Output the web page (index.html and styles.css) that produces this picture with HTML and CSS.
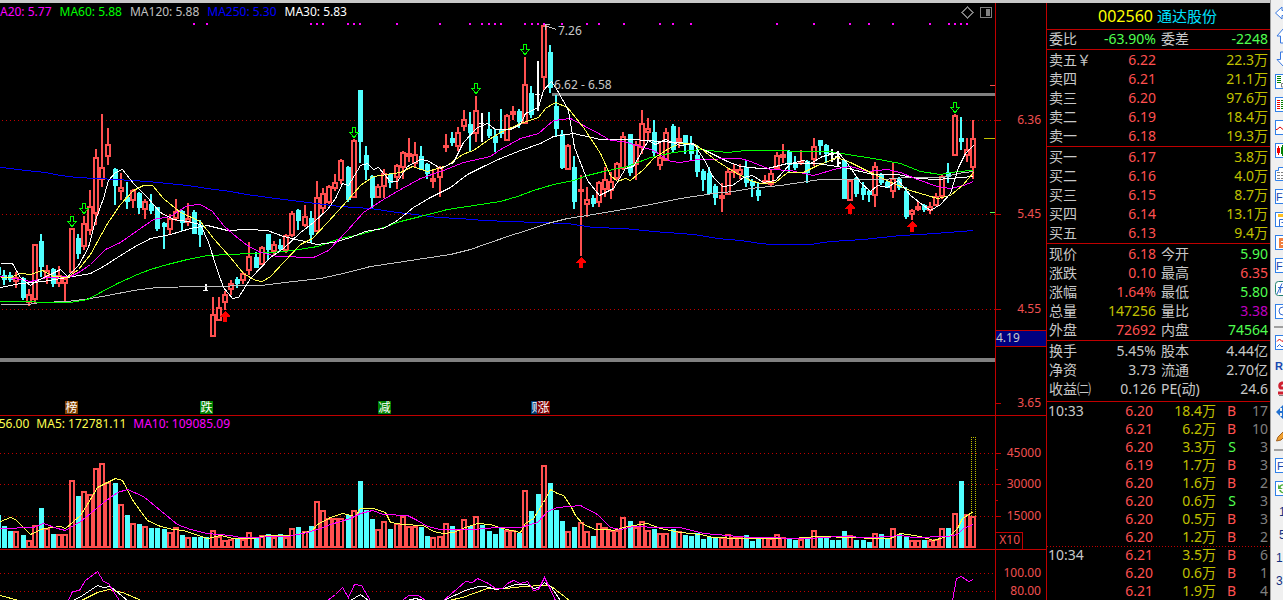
FILE: index.html
```html
<!DOCTYPE html>
<html lang="zh-CN">
<head>
<meta charset="utf-8">
<title>002560 通达股份</title>
<link rel="stylesheet" href="styles.css">
</head>
<body>
<main class="terminal">
  <section class="charts">
    <div class="pane pane-price">
      <svg class="plot" viewBox="0 3 1046 413" preserveAspectRatio="xMaxYMin slice" shape-rendering="crispEdges">
        <g class="grid"><path d="M2 120.5H995M2 214.5H995M2 309.5H995"/></g>
        <rect class="band" x="552" y="93" width="443" height="3"/>
        <rect class="band" x="0" y="358" width="995" height="4"/>
        <g id="candles"></g>
        <g id="price-lines" transform="translate(0.5 0.5)"></g>
        <g id="marks"></g>
        <path class="pointer" d="M556 29.5L545 25.5M550 24.5H545V30"/>
        <text class="note" x="558" y="35">7.26</text>
        <text class="note" x="554" y="89">6.62 - 6.58</text>
        <g class="tag">
          <rect x="65" y="401" width="13" height="13" fill="#804000"/><text x="65.5" y="412">榜</text>
          <rect x="200" y="401" width="13" height="13" fill="#008000"/><text x="200.5" y="412">跌</text>
          <rect x="378" y="401" width="13" height="13" fill="#008000"/><text x="378.5" y="412">减</text>
          <rect x="531" y="401" width="13" height="13" fill="#003870"/><text x="531.5" y="412">财</text>
          <rect x="537" y="401" width="13" height="13" fill="#800000"/><text x="537.5" y="412">涨</text>
        </g>
        <path class="frame" d="M995.5 3V416M995 120.5h6M995 214.5h6M995 309.5h6M995 403.5h6M0 415.5H1046"/>
        <path stroke="#f05050" d="M990 85.5h5"/>
        <path stroke="#c0c000" d="M984 138.5h11"/>
        <path stroke="#50ff50" d="M990 212.5h5"/>
        <rect x="996" y="330" width="50" height="17" fill="#000080"/>
        <path class="frame" d="M996 330.5H1046M996 346.5H1046"/>
        <text class="note" x="996" y="342">4.19</text>
        <g class="axis"><text x="1041" y="124">6.36</text><text x="1041" y="218">5.45</text><text x="1041" y="313">4.55</text><text x="1041" y="407">3.65</text></g>
        <g class="tool"><path d="M962 12.5L967.5 7L973 12.5L967.5 18Z"/><rect x="980.5" y="7.5" width="11" height="10" rx="1"/><path class="tool-fill" d="M986 9h4v7h-4z"/></g>
      </svg>
      <div class="legend legend-price">
        <span class="ma20">MA20: 5.77</span><span class="ma60">MA60: 5.88</span><span class="ma120">MA120: 5.88</span><span class="ma250">MA250: 5.30</span><span class="ma30">MA30: 5.83</span>
      </div>
    </div>
    <div class="pane pane-volume">
      <svg class="plot" viewBox="0 416 1046 134" preserveAspectRatio="xMaxYMin slice" shape-rendering="crispEdges">
        <g class="grid"><path d="M0 453.5H995M0 484.5H995M0 516.5H995"/></g>
        <g id="volumes"></g>
        <path class="projection" d="M971.5 437V516M975.5 437V516M971 437.5H976"/>
        <g id="volume-lines" transform="translate(0.5 0.5)"></g>
        <path class="frame" d="M995.5 416V550M995 453.5h6M995 484.5h6M995 516.5h6M995 469.5h3M995 500.5h3M0 549.5H1046M995 532.5H1022.5V549"/>
        <g class="axis"><text x="1041" y="457">45000</text><text x="1041" y="488">30000</text><text x="1041" y="520">15000</text><text x="1020" y="544">X10</text></g>
      </svg>
      <div class="legend legend-volume"><span class="yellow">147256.00</span><span class="yellow">MA5: 172781.11</span><span class="ma20">MA10: 109085.09</span></div>
    </div>
    <div class="pane pane-osc">
      <svg class="plot" viewBox="0 550 1046 50" preserveAspectRatio="xMaxYMin slice" shape-rendering="crispEdges">
        <g class="grid"><path d="M0 573.5H995M0 591.5H995"/></g>
        <g id="osc-lines" transform="translate(0.5 0.5)"></g>
        <path class="frame" d="M995.5 550V600"/>
        <g class="axis"><text x="1041" y="577">100.00</text><text x="1041" y="595">80.00</text></g>
      </svg>
    </div>
  </section>
  <aside class="quote">
    <h1 class="title"><span class="code">002560</span><span class="name">通达股份</span></h1>
    <table class="block flush">
      <tr><th>委比</th><td class="green">-63.90%</td><th>委差</th><td class="green">-2248</td></tr>
    </table>
    <table class="block book">
      <tr><th>卖五￥</th><td>6.22</td><td colspan="2">22.3万</td></tr>
      <tr><th>卖四</th><td>6.21</td><td colspan="2">21.1万</td></tr>
      <tr><th>卖三</th><td>6.20</td><td colspan="2">97.6万</td></tr>
      <tr><th>卖二</th><td>6.19</td><td colspan="2">18.4万</td></tr>
      <tr><th>卖一</th><td>6.18</td><td colspan="2">19.3万</td></tr>
    </table>
    <table class="block book">
      <tr><th>买一</th><td>6.17</td><td colspan="2">3.8万</td></tr>
      <tr><th>买二</th><td>6.16</td><td colspan="2">4.0万</td></tr>
      <tr><th>买三</th><td>6.15</td><td colspan="2">8.7万</td></tr>
      <tr><th>买四</th><td>6.14</td><td colspan="2">13.1万</td></tr>
      <tr><th>买五</th><td>6.13</td><td colspan="2">9.4万</td></tr>
    </table>
    <table class="block">
      <tr><th>现价</th><td class="red">6.18</td><th>今开</th><td class="green">5.90</td></tr>
      <tr><th>涨跌</th><td class="red">0.10</td><th>最高</th><td class="red">6.35</td></tr>
      <tr><th>涨幅</th><td class="red">1.64%</td><th>最低</th><td class="green">5.80</td></tr>
      <tr><th>总量</th><td class="olive">147256</td><th>量比</th><td class="purple">3.38</td></tr>
      <tr><th>外盘</th><td class="red">72692</td><th>内盘</th><td class="green">74564</td></tr>
    </table>
    <table class="block last">
      <tr><th>换手</th><td>5.45%</td><th>股本</th><td>4.44亿</td></tr>
      <tr><th>净资</th><td>3.73</td><th>流通</th><td>2.70亿</td></tr>
      <tr><th>收益㈡</th><td>0.126</td><th>PE(动)</th><td>24.6</td></tr>
    </table>
    <table class="ticks">
      <tr><th>10:33</th><td>6.20</td><td>18.4万</td><td class="buy">B</td><td>17</td></tr>
      <tr><th></th><td>6.21</td><td>6.2万</td><td class="buy">B</td><td>10</td></tr>
      <tr><th></th><td>6.20</td><td>3.3万</td><td class="sell">S</td><td>3</td></tr>
      <tr><th></th><td>6.19</td><td>1.7万</td><td class="buy">B</td><td>3</td></tr>
      <tr><th></th><td>6.20</td><td>1.6万</td><td class="buy">B</td><td>2</td></tr>
      <tr><th></th><td>6.20</td><td>0.6万</td><td class="sell">S</td><td>3</td></tr>
      <tr><th></th><td>6.20</td><td>0.5万</td><td class="buy">B</td><td>3</td></tr>
      <tr><th></th><td>6.20</td><td>1.2万</td><td class="buy">B</td><td>2</td></tr>
      <tr class="minute"><th>10:34</th><td>6.21</td><td>3.5万</td><td class="buy">B</td><td>6</td></tr>
      <tr><th></th><td>6.20</td><td>0.6万</td><td class="buy">B</td><td>1</td></tr>
      <tr><th></th><td>6.21</td><td>1.9万</td><td class="buy">B</td><td>4</td></tr>
    </table>
  </aside>
</main>
<nav class="toolbar" aria-label="工具栏">
  <button aria-label="后退"><svg viewBox="0 0 16 16"><path class="arrow" d="M0.5 8L7 2V5.500H15V10.500H7V14Z"/></svg></button>
  <button aria-label="向上"><svg viewBox="0 0 16 16"><path class="arrow" d="M8.500 0.500L15.500 8H11.500V15H5.500V8H2Z"/></svg></button>
  <button aria-label="向下"><svg viewBox="0 0 16 16"><path class="arrow" d="M5.500 1H11.500V8H15.500L8.500 15.500L2 8.500H5.500Z"/></svg></button>
  <button aria-label="报表"><svg viewBox="0 0 16 16"><rect class="box" x=".5" y=".5" width="15" height="14"/><path stroke="#008000" d="M2 2.500h4M2 4.500h4M2 6.500h4M2 8.500h4"/><path class="dim" d="M14 9.500H6.500V13H14"/></svg></button>
  <button aria-label="分价"><svg viewBox="0 0 16 16"><rect class="box" x=".5" y=".5" width="15" height="14"/><path stroke="#f00000" d="M2 3.500h3M2 5.500h3M2 7.500h3M2 9.500h3M2 11.500h3"/><path stroke="#008000" d="M6 3.500h3M6 5.500h3M6 7.500h3M6 9.500h3M6 11.500h3"/></svg></button>
  <button aria-label="分时"><svg viewBox="0 0 16 16"><rect class="box" x=".5" y=".5" width="15" height="14"/><path stroke="#e00000" fill="none" d="M1 9.500H2L5 7L8 9.500L12 6"/></svg></button>
  <button aria-label="K线"><svg viewBox="0 0 16 16"><rect class="box" x=".5" y=".5" width="15" height="14"/><path fill="#f00000" d="M2 5h1V3h1v2h1v5H4v2H3v-2H2z"/><path fill="#008000" d="M6 4h1V2h1v11H7v-2H6z"/></svg></button>
  <button aria-label="资料"><svg viewBox="0 0 16 16"><path class="box" d="M.5 4.500H3.500V1.500H15V14.500H.5Z"/><path class="dim" d="M2 6.500h12M2 9.500h12M2 12.500h12" stroke-dasharray="3 1"/></svg></button>
  <button aria-label="公式"><svg viewBox="0 0 16 16"><rect class="box" x=".5" y=".5" width="15" height="14"/><text x="1" y="12">Fn</text></svg></button>
  <button aria-label="画图"><svg viewBox="0 0 16 16"><rect class="box" x=".5" y=".5" width="15" height="14"/><rect x="3" y="2" width="10" height="3" fill="#ffc020"/><path class="thin" d="M4.500 14V7.500H12M6.500 10.500H12"/></svg></button>
  <button aria-label="自选"><svg viewBox="0 0 16 16"><rect class="box" x=".5" y=".5" width="15" height="14"/><path fill="#f08040" d="M4 3h8v10H4z"/><path stroke="#fff" d="M6 6.500h5M6 9.500h5"/></svg></button>
  <button aria-label="公式管理"><svg viewBox="0 0 16 16"><rect class="box" x=".5" y=".5" width="15" height="14"/><text x="1" y="12">Fn</text></svg></button>
  <button aria-label="函数"><svg viewBox="0 0 16 16"><rect x=".5" y=".5" width="15" height="14" rx="3" fill="#fff" stroke="#208070"/><path class="thin" d="M2 13L7 2.500M3 6.500H9M6 6L5 12"/></svg></button>
  <button aria-label="查询"><svg viewBox="0 0 16 16"><rect class="box" x=".5" y=".5" width="15" height="14"/><circle class="thin" cx="8" cy="7" r="4"/></svg></button>
  <hr>
  <button aria-label="指标"><svg viewBox="0 0 16 16"><rect class="box" x=".5" y=".5" width="15" height="14"/><path fill="none" stroke="#e00000" d="M2 6.500L4.500 4L7 6.500L10 4"/><path class="thin" d="M2 12L4.500 9.500L7 12L10 9"/></svg></button>
  <button aria-label="RSI"><svg viewBox="0 0 16 16"><text class="bold" x="0" y="12">RS</text></svg></button>
  <button aria-label="交易"><svg viewBox="0 0 16 16"><path fill="none" stroke="#d02030" stroke-width="3" d="M13 2H7C4 3 4 7 7 7H10C13 8 13 12 10 12H3"/><path class="dim" d="M4 14.500H12"/></svg></button>
  <button aria-label="移动"><svg viewBox="0 0 16 16"><path fill="#2070d0" d="M1 8L5 4V7H7V4H5L9 0L13 4H11V7H15V9H11V12H13L9 16L5 12H7V9H5V12Z"/></svg></button>
  <button aria-label="编辑"><svg viewBox="0 0 16 16"><path fill="#f0a030" stroke="#a06020" d="M1.500 14L3 10L11 2L14 5L6 13Z"/></svg></button>
  <hr>
  <button aria-label="F10"><svg viewBox="0 0 16 16"><rect class="box" x=".5" y=".5" width="15" height="14"/><text x="2" y="12">F</text></svg></button>
  <button aria-label="刷新"><svg viewBox="0 0 16 16"><rect class="box" x=".5" y=".5" width="15" height="14"/><path fill="#50b040" d="M3 3L4 5C7 2 11 3 13 6L10 5C8 4 6 5 5.500 6.500L8 8H3ZM4 9C5 13 10 13 13 10L10 11C8 12 6 10 6 9Z"/></svg></button>
  <button class="period">1</button>
  <button class="period">5</button>
  <button class="period wide">1</button>
  <button class="period wide">3</button>
</nav>
<script src="chart.js"></script>
</body>
</html>
```

FILE: styles.css
```css
* { box-sizing: border-box; }

body {
  margin: 0;
  height: 100vh;
  display: flex;
  overflow: hidden;
  background: #000;
  color: #c8c8c8;
  font-family: "Noto Sans", "Noto Sans CJK SC", sans-serif;
  font-size: 14px;
}

.terminal {
  flex: 1;
  min-width: 0;
  display: flex;
  background: #000;
  border-style: solid;
  border-width: 3px 0 0;
  border-image: linear-gradient(#c8c8c8 66%, #808080 66%) 3;
}

.charts {
  flex: 1;
  min-width: 0;
  display: flex;
  flex-direction: column;
}

.pane { position: relative; overflow: hidden; }
.pane-price { flex: 0 0 413px; }
.pane-volume { flex: 0 0 134px; }
.pane-osc { flex: 1; }
.plot { display: block; width: 100%; }
.pane-price .plot { height: 413px; }
.pane-volume .plot { height: 134px; }
.pane-osc .plot { height: 50px; }

.legend {
  position: absolute;
  left: 0;
  display: flex;
  justify-content: flex-end;
  font-size: 12px;
  line-height: 16px;
  white-space: nowrap;
}
.legend-price { top: 1px; width: 347px; gap: 8px; }
.legend-volume { top: 0; width: 230px; gap: 7px; }

.ma20 { color: #ff00ff; }
.ma60 { color: #00ff00; }
.ma120 { color: #c0c0c0; }
.ma250 { color: #0000ff; }
.ma30 { color: #ffffff; }
.yellow { color: #ffff50; }

.grid { stroke: #c00000; stroke-dasharray: 1 3; }
.frame { fill: none; stroke: #c00000; }
.band { fill: #808080; }
.line { fill: none; stroke-width: 1; }
.projection { fill: none; stroke: #c0c000; stroke-dasharray: 1 1; }
.note { fill: #c8c8c8; font-size: 12px; }
.axis { fill: #f05050; font-size: 12px; text-anchor: end; }
.tag { fill: #fff; font-size: 12px; font-family: "Noto Sans CJK SC", sans-serif; }
.pointer { fill: none; stroke: #c8c8c8; }
.tool { fill: none; stroke: #808080; }
.tool-fill { fill: #808080; stroke: none; }
.up { fill: #ff5050; }
.up-body { fill: #000; stroke: #ff5050; stroke-width: 2; }
.down { fill: #50ffff; }
.flat { fill: #fff; }
.signal-up { fill: #ff0000; }
.signal-down { fill: none; stroke: #00ff00; }
.dot { fill: #ff00ff; }

.quote {
  flex: 0 0 224px;
  border-left: 1px solid #c00000;
  overflow: hidden;
}

.title {
  margin: 0;
  height: 27px;
  padding-right: 2px;
  display: flex;
  justify-content: center;
  align-items: center;
  gap: 4px;
  border-bottom: 1px solid #c00000;
  font-size: 16px;
  font-weight: normal;
  line-height: 24px;
}
.code { color: #ffff00; }
.name { color: #00e0ff; font-size: 15px; }

table {
  width: 100%;
  table-layout: fixed;
  border-collapse: separate;
  border-spacing: 0;
}
th, td {
  padding: 0;
  font-weight: normal;
  text-align: right;
  white-space: nowrap;
}
th { text-align: left; }

.block { border-bottom: 1px solid #c00000; padding-top: 1px; }
.block.flush { padding-top: 0; }
.block.last { padding-bottom: 2px; }
.block th, .block td { height: 19px; padding-bottom: 2px; line-height: 17px; }
.block th:first-child { width: 49px; padding-left: 2px; }
.block td:nth-child(2) { width: 60px; }
.block th:nth-child(3) { width: 52px; padding-left: 5px; }
.block td:last-child { padding-right: 2px; }

.red, .book td, .buy { color: #ff5050; }
.green { color: #50ff50; }
.purple { color: #c000c0; }
.olive, .book td:last-child { color: #c0c000; }

.ticks th, .ticks td { height: 18px; line-height: 18px; }
.ticks th { width: 50px; padding-left: 1px; }
.ticks td:nth-child(2) { width: 56px; color: #ff5050; }
.ticks td:nth-child(3) { width: 63px; color: #c0c000; }
.ticks td:nth-child(4) { width: 20px; }
.ticks td:last-child { padding-right: 2px; color: #808080; }
.ticks .sell { color: #50ff50; }
.minute th, .minute td {
  background: repeating-linear-gradient(90deg, #c00000 0 1px, transparent 1px 3px) top / 100% 1px no-repeat;
}

.toolbar {
  flex: 0 0 13px;
  padding: 1px 0 0 4px;
  overflow: hidden;
  background: #f0f0f0;
  border-left: 1px solid #a0a0a0;
}
.toolbar button {
  display: flex;
  align-items: center;
  width: 16px;
  height: 23px;
  padding: 0;
  border: 0;
  background: none;
}
.toolbar svg { width: 16px; height: 16px; flex: none; fill: none; }
.toolbar hr {
  width: 16px;
  height: 2px;
  margin: 3px 0 3px -1px;
  border: 0;
  background: #a0a0a0;
}
.toolbar text { fill: #1848b0; font: 11px "Liberation Sans", sans-serif; }
.toolbar .bold { font-weight: bold; }
.arrow { fill: #fff; stroke: #3878e0; }
.box { fill: #fff; stroke: #3080e8; }
.thin { fill: none; stroke: #3068d0; }
.dim { fill: none; stroke: #808080; }
.toolbar .period {
  padding-left: 4px;
  color: #103080;
  font: 12px "Liberation Sans", sans-serif;
}
.toolbar .wide { padding-left: 1px; }
```

FILE: chart.js
```js
const NS = 'http://www.w3.org/2000/svg';
const add = (id, tag, attrs) => {
  const el = document.createElementNS(NS, tag);
  for (const k in attrs) el.setAttribute(k, attrs[k]);
  document.getElementById(id).appendChild(el);
};
const slotX = i => Math.floor(4.64 + 6.132 * i);

// kind, high, body top, body bottom, low
const candles = `c270,275,279,285 c272,275,279,282 r272,277,281,288 c277,278,297,300 r289,294,302,306 r244,244,299,303
c234,241,266,277 r265,270,276,284 c268,269,283,287 r266,275,283,287 r276,278,283,302 r228,228,272,273 c234,238,253,259
r216,223,246,250 r190,206,230,235 r149,157,213,225 r114,167,179,187 r128,144,156,165 c168,169,185,205 r173,187,191,200
c182,197,201,209 r189,190,200,208 c192,193,207,214 r199,201,209,219 c194,204,210,214 c207,207,228,231 c222,223,226,249
r214,218,229,235 r199,211,218,221 c210,211,222,231 r203,218,222,226 c210,212,233,234 c220,225,234,247 w284,290,291,291
r297,314,336,337 r297,307,320,321 r291,294,302,310 r280,283,289,295 c277,279,283,288 r272,273,280,284 r242,256,270,275
c252,257,267,268 r246,247,264,265 c234,234,249,260 r241,244,251,255 c239,245,248,251 r234,235,250,253 r211,213,235,237
c209,210,220,230 r205,216,225,227 c211,218,234,243 r181,197,231,232 r188,193,208,213 r185,186,202,204 r174,182,188,191
r159,160,180,184 c166,167,199,202 r139,140,197,198 c90,90,141,163 c146,155,169,180 c175,176,197,209 r184,186,197,198
r169,173,186,198 c173,174,182,188 r164,165,177,189 r151,152,167,179 r138,153,156,162 r142,154,163,167 c146,156,169,170
c163,164,173,179 r170,178,181,188 r166,167,177,197 r134,145,147,152 c132,138,142,146 r127,132,146,151 r110,119,126,131
c112,124,132,151 r96,110,133,142 w113,123,124,142 c112,129,135,138 c129,136,142,152 c109,130,133,138 r114,115,140,141
r106,111,114,120 c109,111,121,128 r57,84,123,124 c86,93,114,118 w61,94,95,111 r24,25,77,90 c45,52,87,93 c95,106,128,136
c130,134,167,169 r144,145,169,170 c156,167,201,209 r175,189,191,256 r187,199,204,217 c195,198,203,207 r181,182,202,207
r167,179,189,197 r172,181,190,199 r162,163,178,180 r132,136,168,170 c134,134,172,176 r141,144,164,180 r110,123,147,154
r118,128,132,140 c120,132,152,156 r143,157,165,170 r128,132,160,161 c124,126,149,152 r127,138,141,148 c135,135,144,154
c136,143,153,160 c145,155,171,177 c169,171,179,191 c167,173,193,193 c184,186,197,205 r183,195,198,212 r168,171,194,195
r164,169,172,178 r164,169,174,179 c160,167,182,187 c179,181,185,197 c183,190,195,201 r175,180,183,184 r170,173,184,186
r152,155,168,170 r144,154,157,163 c150,151,164,173 c156,163,167,170 r150,161,163,165 c160,161,172,183 r138,146,159,166
c140,140,145,155 c144,145,153,163 w149,153,160,162 w151,156,164,166 c159,160,198,199 r179,180,200,201 c177,178,193,197
c182,188,194,200 c190,191,194,202 r162,166,195,207 c173,174,182,185 c180,182,187,188 r163,178,191,198 c177,179,187,190
c187,191,216,219 r209,210,214,220 r202,206,209,211 c204,205,209,212 r202,206,210,214 r193,196,205,206 r174,176,196,199
c163,172,176,183 r114,115,155,156 c117,138,141,150 r138,149,155,162 r120,138,167,179`.split(/\s+/);

// bar tops, in thirds of a unit below 395
const volumes = [393,408,408,420,435,390,339,399,417,417,417,255,303,288,297,218,204,262,264,327,360,384,387,393,399,399,402,
411,396,420,426,426,426,426,405,424,436,432,432,432,411,428,420,417,426,417,426,399,396,408,393,318,345,369,369,369,360,345,
258,345,372,402,378,402,384,363,393,393,396,423,426,423,384,393,402,372,393,363,390,408,417,396,405,405,414,285,348,297,210,
264,345,378,408,396,381,408,423,384,396,405,405,366,378,396,378,405,402,414,414,402,408,420,423,414,432,426,429,426,418,426,
423,420,438,429,426,429,418,426,429,435,432,426,405,429,429,435,435,408,420,435,435,441,414,417,432,399,417,426,435,435,435,
435,432,399,399,354,258,357,362];

const column = (id, kind, x, top, bottom) => {
  if (kind === 'r') add(id, 'rect', { class: 'up-body', x: x - 2, y: top + 1, width: 4, height: Math.max(1, bottom - top - 2) });
  else if (kind === 'c') add(id, 'rect', { class: 'down', x: x - 2, y: top, width: 5, height: bottom - top });
};
const wickClass = { r: 'up', c: 'down', w: 'flat' };

add('candles', 'rect', { class: 'down', x: -2, y: 267, width: 3, height: 8 });
add('volumes', 'rect', { class: 'down', x: -2, y: 515, width: 3, height: 33 });
candles.forEach((item, i) => {
  const kind = item[0];
  const [high, top, bottom, low] = item.slice(1).split(',').map(Number);
  const x = slotX(i);
  add('candles', 'rect', { class: wickClass[kind], x: x - 1, y: high, width: 2, height: low - high });
  if (kind === 'w') {
    add('candles', 'rect', { class: 'flat', x: x - 3, y: top, width: 5, height: bottom - top > 3 ? 2 : 1 });
    if (bottom - top > 3) add('candles', 'rect', { class: 'flat', x: x - 1, y: bottom - 2, width: 4, height: 2 });
  }
  column('candles', kind, x, top, bottom + 1);
  column('volumes', kind === 'w' ? 'c' : kind, x, Math.round(395 + volumes[i] / 3), 548);
});

const line = (id, color, points) => add(id, 'polyline', { class: 'line', stroke: color, points });
line('price-lines', '#0000ff', '0,167 10,168 25,170 45,172 60,175 76,177 97,178 115,179 147,181 167,183 187,185 207,188 230,191 246,194 283,199 300,201 323,204 340,206 370,208 397,212 423,215 437,217 460,218 483,220 510,221 537,222 567,223 593,227 623,228 653,231 693,234 717,238 740,240 760,243 770,244 810,244 830,241 863,239 900,235 920,234 947,232 973,230');
line('price-lines', '#c0c0c0', '0,304 27,304 40,302 67,301 90,298 107,295 133,290 157,287 200,286 260,285 293,281 320,278 347,272 370,266 397,262 423,258 450,254 470,249 487,243 510,235 523,231 547,223 567,218 593,214 623,209 650,204 680,198 713,193 733,191 750,188 780,185 820,179 883,179 907,177 943,177 957,173 973,171');
line('price-lines', '#00ff00', '0,301 70,302 87,299 100,292 117,283 137,274 150,269 167,264 187,259 207,255 230,254 270,252 293,250 317,246 340,238 360,234 383,227 400,221 420,216 447,209 480,204 500,201 517,196 533,190 553,184 573,180 587,175 603,171 627,166 650,157 673,152 700,149 727,152 745,150 830,151 847,154 873,158 900,163 920,171 940,174 957,171 973,170');
line('price-lines', '#ffffff', '0,287 20,283 43,281 67,277 90,273 103,266 117,257 133,247 150,238 170,234 190,228 207,225 227,230 247,229 267,230 283,236 300,240 317,244 333,242 350,237 365,231 383,228 397,220 413,207 430,197 450,187 467,174 483,166 500,158 520,150 540,143 553,136 573,133 600,139 633,139 660,141 690,143 707,151 727,161 740,166 760,168 767,168 787,163 817,163 843,167 873,174 897,174 917,178 937,179 973,176');
line('price-lines', '#ff00ff', '0,276 20,279 30,281 47,277 70,276 80,271 90,264 105,249 120,242 140,228 153,219 170,216 187,205 200,204 212,211 223,225 233,234 247,245 260,252 277,256 313,257 328,250 347,230 363,212 383,199 400,189 420,178 443,170 463,162 490,156 500,149 520,138 538,133 553,120 570,118 583,125 600,134 610,140 623,141 640,146 653,150 670,161 680,162 697,159 740,158 750,161 770,169 790,170 813,175 837,168 850,166 867,171 887,169 900,172 917,179 937,186 950,188 963,185 973,181');
line('price-lines', '#ffff50', '0,277 10,277 20,273 30,274 42,270 53,276 67,277 78,269 90,254 107,223 120,204 133,190 143,185 152,185 163,198 180,212 200,221 213,238 230,257 243,273 255,280 262,281 270,276 283,262 300,244 312,238 327,222 347,200 360,185 373,176 400,172 412,166 427,171 447,165 462,154 473,150 487,140 500,132 520,123 538,117 545,108 555,102 567,107 583,127 600,153 610,175 617,181 625,178 630,180 643,169 653,158 670,147 680,143 693,143 703,150 717,161 733,171 750,180 760,183 775,182 787,172 803,172 817,165 837,157 850,162 870,172 893,183 910,190 937,198 950,195 963,184 973,172');
line('price-lines', '#ffffff', '0,263 12,263 20,277 30,285 37,280 50,274 60,269 67,276 78,265 88,247 95,220 103,198 108,180 115,172 122,169 133,183 147,197 160,212 173,219 187,221 200,224 208,242 217,270 223,287 232,298 238,297 250,278 270,257 283,248 300,232 313,222 327,209 335,198 342,183 348,185 360,165 367,163 373,169 378,167 390,181 397,181 407,166 420,159 427,160 440,168 453,162 463,142 477,127 487,123 495,129 510,129 520,124 525,113 538,107 543,90 551,81 557,90 568,110 574,147 587,180 599,195 613,188 625,168 633,166 642,150 648,140 655,144 665,139 680,145 693,143 703,158 713,177 722,186 732,185 743,177 752,175 763,182 775,180 790,163 803,160 810,163 822,156 838,152 847,163 860,182 870,191 877,185 887,187 898,180 910,195 923,205 930,210 940,204 950,193 958,167 965,153 973,145');

line('volume-lines', '#ffff50', '0,521 10,517 15,519 30,534 43,528 60,526 65,528 80,515 90,499 97,487 107,482 115,478 122,480 133,501 147,520 160,526 173,529 183,530 207,538 220,535 233,538 253,538 267,535 293,535 312,530 317,524 330,517 342,513 355,516 360,508 373,508 385,512 390,522 402,524 423,525 433,531 443,533 453,532 465,527 477,523 490,524 502,528 520,532 525,523 533,518 543,502 550,489 557,493 563,495 570,505 575,515 583,524 595,529 607,529 613,530 627,526 647,523 660,528 680,532 700,534 713,537 740,538 793,538 817,536 853,537 873,538 890,538 900,533 920,536 933,540 950,535 957,528 962,518 973,511');
line('volume-lines', '#ff00ff', '0,528 33,527 43,523 57,528 65,530 80,521 90,513 103,502 117,492 127,489 143,496 160,510 177,524 190,529 207,533 230,535 240,537 287,536 307,532 320,528 330,524 350,518 360,513 372,510 383,514 407,515 417,520 427,526 440,529 473,529 497,527 520,527 537,522 547,511 557,507 580,505 597,514 610,527 620,529 633,526 660,527 680,527 703,533 727,535 750,537 810,538 837,536 873,537 900,535 913,537 947,536 957,534 963,528 973,524');

line('osc-lines', '#ffff50', '0,595 18,600');
line('osc-lines', '#ffff50', '81,600 97,592 108,589 122,592 141,600');
line('osc-lines', '#ffff50', '448,600 462,597 487,588 505,588 523,586 543,585 551,586 569,600');
line('osc-lines', '#ffffff', '72,600 79,597 97,585 103,587 110,586 127,600');
line('osc-lines', '#ffffff', '350,600 360,594 368,600');
line('osc-lines', '#ffffff', '407,600 415,598 423,600');
line('osc-lines', '#ffffff', '443,600 465,590 478,586 485,586 495,589 503,588 515,584 527,584 533,588 539,587 544,582 551,587 560,600');
line('osc-lines', '#ff00ff', '68,600 72,591 79,590 85,580 97,571 103,581 108,583 115,594 119,600');
line('osc-lines', '#ff00ff', '327,600 335,594 342,587 348,597 354,584 361,585 370,600');
line('osc-lines', '#ff00ff', '402,600 408,595 418,595 425,600');
line('osc-lines', '#ff00ff', '443,600 457,588 465,581 472,582 477,578 488,583 495,588 502,588 507,583 513,580 520,583 527,581 533,590 538,589 544,577 550,589 555,600');
line('osc-lines', '#ff00ff', '952,600 956,578 961,576 968,581 973,579');

[194,207,311,317,323,348,354,360,397,440,470,482,489,495,501,525,532,538,544,562,587,599,624,660,673,691,777,814,850,869,893,930,949,955,961,967]
  .forEach(x => add('marks', 'rect', { class: 'dot', x: x - 1, y: 23, width: 2, height: 2 }));
[[72,216],[84,203],[354,127],[476,83],[525,44],[955,102]].forEach(([x, y]) =>
  add('marks', 'path', { class: 'signal-down', d: `M${x - 1.5} ${y + .5}h3v5h3l-4.500 5l-4.500 -5h3z` }));
[[225,311],[581,257],[850,203],[912,221]].forEach(([x, y]) =>
  add('marks', 'path', { class: 'signal-up', d: `M${x} ${y}l5 5v1h-3v5h-4v-5h-3v-1z` }));
```
